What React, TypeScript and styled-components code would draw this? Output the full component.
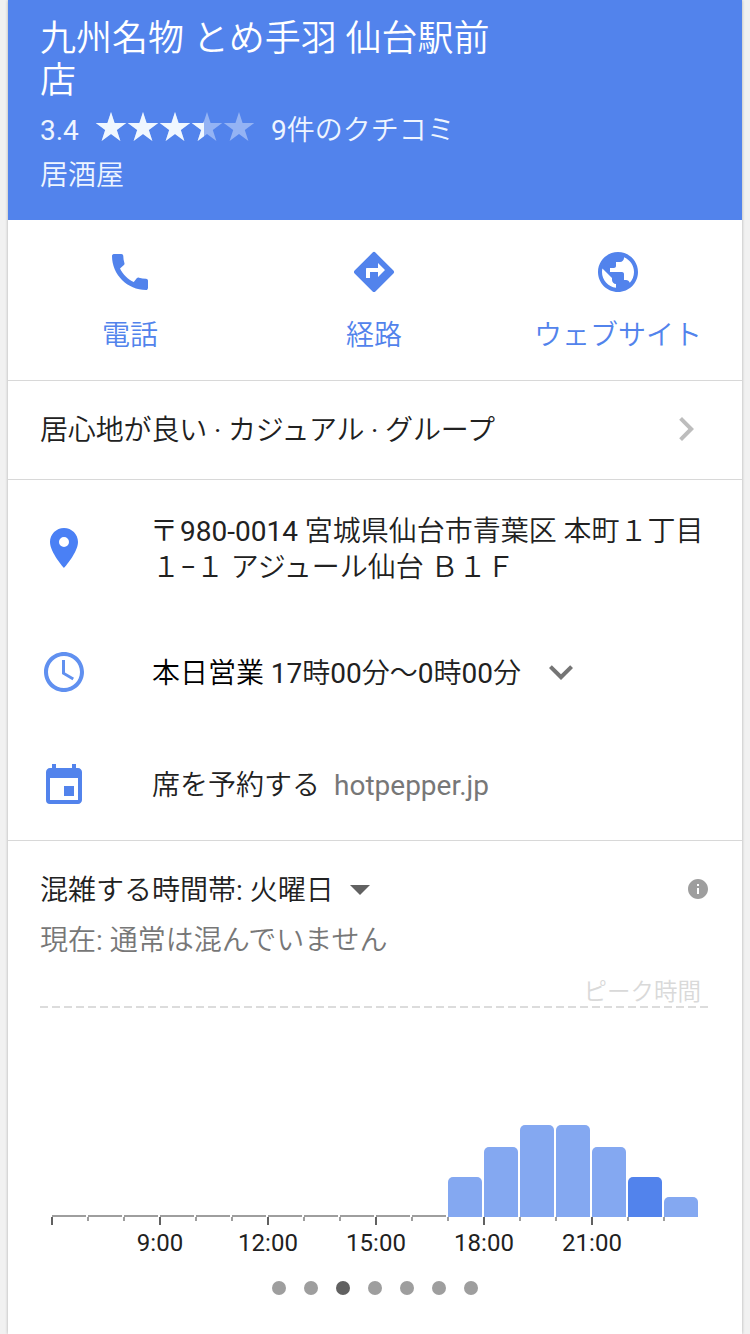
import React from "react";
import styled, { createGlobalStyle } from "styled-components";

const GlobalStyle = createGlobalStyle`
  * { box-sizing: border-box; }
  body {
    margin: 0;
    background: #f1f1f1;
    font-family: Roboto, "Noto Sans CJK JP", sans-serif;
    font-size: 28px;
    font-weight: 350;
    color: #212121;
  }
`;

const Card = styled.main`
  width: 734px;
  height: 1334px;
  margin: 0 8px;
  overflow: hidden;
  background: #fff;
  box-shadow: 0 0 3px rgba(0, 0, 0, 0.28);
`;

const Latin = styled.span`
  font-weight: 400;
`;

const Header = styled.header`
  height: 220px;
  padding: 18px 32px 0;
  background: #5283ec;
  color: #eef5ff;
`;

const Title = styled.h1`
  margin: 0;
  font-size: 36px;
  font-weight: 350;
  line-height: 42px;
  color: #fff;
`;

const RatingRow = styled.div`
  display: flex;
  align-items: center;
  height: 42px;
  margin-top: 5px;
  line-height: 42px;

  > span {
    padding-top: 6px;
  }
`;

const Score = styled.span`
  width: 55px;
  font-weight: 400;
`;

const Stars = styled.svg`
  display: block;
  width: 160px;
  height: 32px;
  margin-right: 16px;
`;

const Category = styled.div`
  margin-top: 6px;
  line-height: 42px;
`;

const Actions = styled.nav`
  display: grid;
  grid-template-columns: repeat(3, 244px);
  height: 161px;
  padding-top: 28px;
  border-bottom: 1px solid #d8d8d8;
`;

const Action = styled.a`
  display: flex;
  flex-direction: column;
  align-items: center;
  gap: 20px;
  line-height: 40px;
  color: #5283ec;
`;

const Icon = styled.svg<{ $size?: number }>`
  display: block;
  flex: none;
  width: ${(p) => p.$size ?? 48}px;
  height: ${(p) => p.$size ?? 48}px;
  fill: currentColor;
`;

const Traits = styled.section`
  display: flex;
  align-items: center;
  justify-content: space-between;
  height: 99px;
  padding: 0 32px 2px;
  border-bottom: 1px solid #d8d8d8;

  ${Icon} {
    color: #bdbdbd;
  }
`;

const TraitList = styled.span`
  padding-bottom: 2px;
  letter-spacing: -0.15px;
`;

const Details = styled.section`
  height: 361px;
  border-bottom: 1px solid #d8d8d8;
`;

const Detail = styled.div<{ $height: number; $tint?: string }>`
  display: flex;
  align-items: center;
  height: ${(p) => p.$height}px;
  padding-left: 32px;
  line-height: 36px;

  > ${Icon} {
    margin-right: 64px;
    color: ${(p) => p.$tint ?? "#5283ec"};
  }
`;

const Booking = styled(Detail)`
  padding-top: 4px;
`;

const DetailText = styled.span<{ $drop?: number }>`
  padding-top: ${(p) => p.$drop ?? 3}px;
`;

const PostMark = styled.span`
  margin: 0 2px 0 -2px;
`;

const Strong = styled.span`
  color: #000;
`;

const Expand = styled.span`
  margin-left: 16px;
  color: #757575;
`;

const Source = styled.span`
  margin-left: 14px;
  font-weight: 400;
  color: #777;
`;

const Busy = styled.section`
  padding: 29px 34px 0 32px;
`;

const BusyHead = styled.div`
  display: flex;
  align-items: center;
  height: 40px;
  line-height: 40px;
`;

const BusyTitle = styled.span`
  padding-top: 2px;
`;

const Triangle = styled.svg`
  width: 20px;
  height: 10px;
  margin-left: 16px;
  fill: #616161;
`;

const Info = styled.span`
  margin: 0 -2px 2px auto;
  color: #9e9e9e;
`;

const Status = styled.div`
  margin: 11px 0 -1px;
  line-height: 40px;
  color: #777;
`;

const Peak = styled.div`
  width: 668px;
  height: 48px;
  padding: 18px 7px 0 0;
  text-align: right;
  font-size: 23.5px;
  line-height: 28px;
  color: #d9d9d9;
  background: repeating-linear-gradient(to right, #dcdcdc 0 8px, transparent 8px 12px) 0 100% / 100% 2px no-repeat;
`;

const Bars = styled.div`
  display: flex;
  align-items: flex-end;
  gap: 2px;
  height: 209px;
  padding-left: 12px;
`;

const Bar = styled.div<{ $now?: boolean; $empty?: boolean }>`
  width: 34px;
  background: ${(p) => (p.$empty ? "#9e9e9e" : p.$now ? "#5283ec" : "#84a8f1")};
  border-radius: ${(p) => (p.$empty ? "0" : "5px 5px 0 0")};
`;

const Ticks = styled.div`
  display: flex;
  height: 8px;
  padding-left: 11px;
`;

const Tick = styled.div<{ $major: boolean }>`
  flex: none;
  width: 36px;
  height: ${(p) => (p.$major ? 8 : 4)}px;
  border-left: 2px solid ${(p) => (p.$major ? "#616161" : "#9e9e9e")};
`;

const Hours = styled.div`
  display: flex;
  padding-left: 66px;
  font-size: 24px;
  font-weight: 400;
  line-height: 36px;
`;

const Hour = styled.span`
  width: 108px;
  text-align: center;
`;

const Pager = styled.div`
  display: flex;
  gap: 18px;
  margin: 20px 0 0 232px;
`;

const Dot = styled.span<{ $active: boolean }>`
  width: 14px;
  height: 14px;
  border-radius: 50%;
  background: ${(p) => (p.$active ? "#616161" : "#9e9e9e")};
`;

const paths = {
  phone:
    "M20.01 15.38c-1.23 0-2.42-.2-3.53-.56-.35-.12-.74-.03-1.01.24l-1.57 1.97c-2.83-1.35-5.48-3.9-6.89-6.83l1.95-1.66c.27-.28.35-.67.24-1.02-.37-1.11-.56-2.3-.56-3.53 0-.54-.45-.99-.99-.99H4.19C3.65 3 3 3.24 3 3.99 3 13.28 10.73 21 20.01 21c.71 0 .99-.63.99-1.18v-3.45c0-.54-.45-.99-.99-.99z",
  directions:
    "M21.71 11.29l-9-9a.996.996 0 0 0-1.41 0l-9 9a.996.996 0 0 0 0 1.41l9 9c.39.39 1.02.39 1.41 0l9-9a.996.996 0 0 0 0-1.41zM14 14.5V12h-4v3H8v-4.5c0-.3.2-.5.5-.5H14V7.5l3.5 3.5-3.5 3.5z",
  globe:
    "M12 2C6.48 2 2 6.48 2 12s4.48 10 10 10 10-4.48 10-10S17.52 2 12 2zm-1 17.93c-3.95-.49-7-3.85-7-7.93 0-.62.08-1.21.21-1.79L9 15v1c0 1.1.9 2 2 2v1.93zm6.9-2.54c-.26-.81-1-1.39-1.9-1.39h-1v-3c0-.55-.45-1-1-1H8v-2h2c.55 0 1-.45 1-1V7h2c1.1 0 2-.9 2-2v-.41c2.93 1.19 5 4.06 5 7.41 0 2.08-.8 3.97-2.1 5.39z",
  pin: "M12 2C8.13 2 5 5.13 5 9c0 5.25 7 13 7 13s7-7.75 7-13c0-3.87-3.13-7-7-7zm0 9.5a2.5 2.5 0 0 1 0-5 2.5 2.5 0 0 1 0 5z",
  clock:
    "M11.99 2C6.47 2 2 6.48 2 12s4.47 10 9.99 10C17.52 22 22 17.52 22 12S17.52 2 11.99 2zM12 20c-4.42 0-8-3.58-8-8s3.58-8 8-8 8 3.58 8 8-3.58 8-8 8zm.5-14H11v7l5.25 3.15.75-1.23-4.5-2.67z",
  event:
    "M17 12h-5v5h5v-5zM16 1v2H8V1H6v2H5c-1.11 0-1.99.9-1.99 2L3 19a2 2 0 0 0 2 2h14c1.1 0 2-.9 2-2V5c0-1.1-.9-2-2-2h-1V1h-2zm3 18H5V8h14v11z",
  down: "M16.59 8.59L12 13.17 7.41 8.59 6 10l6 6 6-6z",
  right: "M10 6L8.59 7.41 13.17 12l-4.58 4.59L10 18l6-6z",
  info: "M12 2C6.48 2 2 6.48 2 12s4.48 10 10 10 10-4.48 10-10S17.52 2 12 2zm1 15h-2v-6h2v6zm0-8h-2V7h2v2z",
};

const Glyph = ({ name, size }: { name: keyof typeof paths; size?: number }) => (
  <Icon viewBox="0 0 24 24" $size={size}>
    <path d={paths[name]} />
  </Icon>
);

const starPoints = (cx: number) =>
  Array.from({ length: 10 }, (_, i) => {
    const r = i % 2 ? 6.1 : 16;
    const a = (Math.PI / 5) * i - Math.PI / 2;
    return `${(cx + r * Math.cos(a)).toFixed(2)},${(16 + r * Math.sin(a)).toFixed(2)}`;
  }).join(" ");

const StarRating = () => (
  <Stars viewBox="0 0 160 32">
    <defs>
      <clipPath id="earned">
        <rect width="109" height="32" />
      </clipPath>
    </defs>
    {[16, 48, 80, 112, 144].map((cx) => (
      <polygon key={cx} points={starPoints(cx)} fill="#94b3f4" />
    ))}
    <g clipPath="url(#earned)">
      {[16, 48, 80, 112].map((cx) => (
        <polygon key={cx} points={starPoints(cx)} fill="#f0f7ff" />
      ))}
    </g>
  </Stars>
);

const levels = [0, 0, 0, 0, 0, 0, 0, 0, 0, 0, 0, 40, 70, 92, 92, 70, 40, 20];
const currentHour = 16;

export default function App() {
  return (
    <>
      <GlobalStyle />
      <Card lang="ja">
        <Header>
          <Title>
            九州名物 とめ手羽 仙台駅前
            <br />店
          </Title>
          <RatingRow>
            <Score>3.4</Score>
            <StarRating />
            <span>
              <Latin>9</Latin>件のクチコミ
            </span>
          </RatingRow>
          <Category>居酒屋</Category>
        </Header>

        <Actions>
          <Action>
            <Glyph name="phone" />
            電話
          </Action>
          <Action>
            <Glyph name="directions" />
            経路
          </Action>
          <Action>
            <Glyph name="globe" />
            ウェブサイト
          </Action>
        </Actions>

        <Traits>
          <TraitList>
            居心地が良い<Latin> · </Latin>カジュアル<Latin> · </Latin>グループ
          </TraitList>
          <Glyph name="right" />
        </Traits>

        <Details>
          <Detail $height={136} $tint="#4a80f5">
            <Glyph name="pin" />
            <DetailText>
              <PostMark>〒</PostMark>
              <Latin>980-0014</Latin> 宮城県仙台市青葉区 本町１丁目
              <br />
              １<Latin>−</Latin>１ アジュール仙台 Ｂ１Ｆ
            </DetailText>
          </Detail>
          <Detail $height={112} $tint="#6090f0">
            <Glyph name="clock" />
            <DetailText>
              <Strong>本日営業</Strong> <Latin>17</Latin>時<Latin>00</Latin>分〜<Latin>0</Latin>時
              <Latin>00</Latin>分
            </DetailText>
            <Expand>
              <Glyph name="down" />
            </Expand>
          </Detail>
          <Booking $height={112}>
            <Glyph name="event" />
            <DetailText $drop={0}>席を予約する</DetailText>
            <Source>hotpepper.jp</Source>
          </Booking>
        </Details>

        <Busy>
          <BusyHead>
            <BusyTitle>
              混雑する時間帯<Latin>: </Latin>火曜日
            </BusyTitle>
            <Triangle viewBox="0 0 20 10">
              <path d="M0 0h20L10 10z" />
            </Triangle>
            <Info>
              <Glyph name="info" size={24} />
            </Info>
          </BusyHead>
          <Status>
            現在<Latin>: </Latin>通常は混んでいません
          </Status>
          <Peak>ピーク時間</Peak>
          <Bars>
            {levels.map((level, i) => (
              <Bar key={i} $empty={!level} $now={i === currentHour} style={{ height: level || 2 }} />
            ))}
          </Bars>
          <Ticks>
            {levels.map((_, i) => (
              <Tick key={i} $major={i % 3 === 0} />
            ))}
          </Ticks>
          <Hours>
            {["9:00", "12:00", "15:00", "18:00", "21:00"].map((hour) => (
              <Hour key={hour}>{hour}</Hour>
            ))}
          </Hours>
          <Pager>
            {[0, 1, 2, 3, 4, 5, 6].map((page) => (
              <Dot key={page} $active={page === 2} />
            ))}
          </Pager>
        </Busy>
      </Card>
    </>
  );
}
